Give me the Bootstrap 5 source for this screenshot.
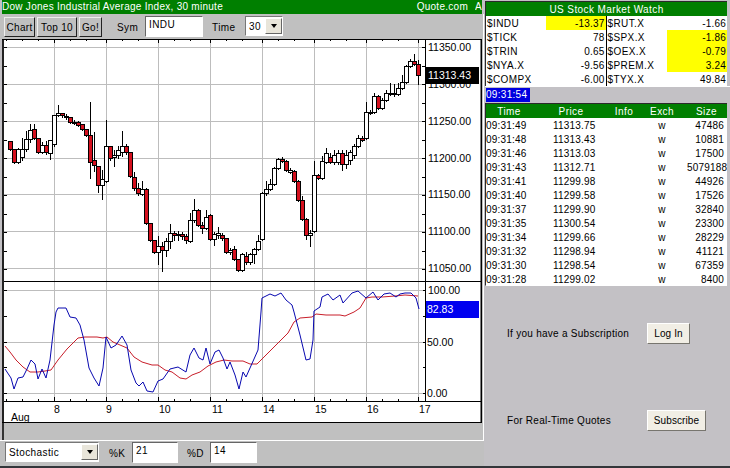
<!DOCTYPE html>
<html lang="en">
<head>
    <meta charset="UTF-8">
    <meta name="viewport" content="width=device-width, initial-scale=1.0">
    <title>Dow Jones Industrial Average Index</title>
    <link href="https://cdn.jsdelivr.net/npm/bootstrap@5.3.1/dist/css/bootstrap.min.css" rel="stylesheet">
    <style>
        html, body { margin: 0; overflow: hidden; background: #c3c1c5; }
        body, .qt-root, .qt-root .btn, .qt-root input, .qt-root table {
            font-family: "Liberation Sans", Arial, sans-serif;
            font-size: 10px;
            color: #000;
        }
        .qt-root { width: 730px; height: 468px; border-bottom: 2px solid #33363a; }
        .qt-left { width: 484px; height: 466px; }
        .qt-title {
            height: 14px; margin-left: 2px; background: #007f00; line-height: 14px;
            letter-spacing: .27px; white-space: nowrap; overflow: hidden; width: 480px;
        }
        .qt-title span { color: #fff; }
        .qt-brand { padding-right: 7px; }
        .qt-cut { width: 7px; overflow: hidden; }
        .qt-tools { height: 25px; padding: 2px 0 0 4px; background: #c0c0c0; border-right: 1px solid #fff; }
        .qt-tools-bottom { height: 26px; padding: 1px 0 0 5px; background: #c0c0c0; border-top: 1px solid #fff; }
        .qt-root .qt-btn {
            height: 20px; padding: 0; margin: 1px 0 0 2px; border-radius: 0; background: #c0c0c0; line-height: 17px;
            border: 1px solid; border-color: #eee #222 #222 #eee; letter-spacing: .3px;
        }
        .qt-root .qt-btn:first-child { margin-left: 0; }
        .qt-w-chart { width: 31px; }
        .qt-w-top { width: 40px; }
        .qt-w-go { width: 23px; }
        .qt-lbl { margin-top: 4px; letter-spacing: .4px; }
        .qt-l-sym { margin-left: 15px; width: 28px; }
        .qt-l-time { margin-left: 9px; width: 33px; }
        .qt-l-k { margin-left: 10px; width: 23px; }
        .qt-l-d { margin-left: 9px; width: 23px; }
        .qt-root input.qt-input {
            height: 21px; padding: 0 3px 5px; border-radius: 0; background: #fff; box-shadow: none; line-height: 14px;
            border: 1px solid; border-color: #666 #fff #fff #666; letter-spacing: .4px;
        }
        .qt-i-sym { width: 58px; }
        .qt-i-k { width: 46px; }
        .qt-i-d { width: 47px; }
        .qt-select {
            height: 20px; background: #fff; border: 1px solid; border-color: #777 #fff #fff #777;
            padding-left: 3px; letter-spacing: .4px;
        }
        .qt-s-time { width: 38px; }
        .qt-s-study { width: 94px; }
        .qt-drop {
            width: 17px; height: 16px; background: #e8e5da; border: 1px solid; border-color: #fff #666 #666 #fff;
        }
        .qt-drop::after {
            content: ""; border: 3px solid transparent; border-top: 4px solid #000; border-bottom: 0;
        }
        .qt-chart { height: 384px; margin-left: 2px; width: 482px; background: #c0c0c0; border-right: 1px solid #fff; }
        .qt-chart svg { display: block; }
        .qt-chart text { font-family: "Liberation Sans", Arial, sans-serif; font-size: 10.5px; }
        .qt-gap { height: 17px; margin-left: 2px; width: 482px; border-left: 2px solid #333; border-right: 1px solid #fff; background: #c0c0c0; }
        .qt-right { width: 246px; padding-left: 1px; }
        .qt-watch { height: 85px; margin-top: 1px; border: 1px solid #2a2a2a; border-width: 1px 0 0 1px; background: #fff; width: 242px; }
        .qt-root table.qt-table { table-layout: fixed; width: 241px; margin: 0; border-collapse: collapse; background: #fff; }
        .qt-table th, .qt-table td {
            height: 14px; padding: 0 1px; line-height: 13px; border: 0; white-space: nowrap; overflow: hidden;
            font-weight: 400; letter-spacing: .2px; background: #fff;
        }
        .qt-table thead th { background: #007f00; color: #fff; text-align: center; letter-spacing: .4px; }
        .qt-table .qt-sym { letter-spacing: .4px; }
        .qt-table .qt-split { border-right: 1px solid #000; }
        .qt-table td.qt-hot { background: #ffff00; }
        .qt-c60 { width: 60px; }
        .qt-c61 { width: 61px; }
        .qt-c46 { width: 46px; }
        .qt-c78 { width: 78px; }
        .qt-c28 { width: 28px; }
        .qt-c48 { width: 48px; }
        .qt-c41 { width: 41px; }
        .qt-clock { height: 17px; padding-top: 1px; background: #c3c1c5; border-top: 1px solid #fff; }
        .qt-clock span { display: block; width: 44px; height: 14px; margin-left: 1px; line-height: 14px; background: #0000e0; color: #fff; letter-spacing: .3px; }
        .qt-trades { width: 242px; height: 183px; border: 1px solid #2a2a2a; border-width: 1px 0 0 1px; border-bottom: 1px solid #ddd; background: #fff; }
        .qt-table td.qt-stamp { padding-left: 0; }
        .qt-table td.qt-pad { padding-left: 21px; }
        .qt-table td.qt-size { padding-right: 3px; }
        .qt-side { padding-left: 22px; }
        .qt-side-row { height: 21px; }
        .qt-side-row span { width: 140px; letter-spacing: .27px; }
        .qt-first { margin-top: 37px; }
        .qt-second { margin-top: 66px; }
        .qt-root .qt-cta {
            height: 21px; padding: 0; border-radius: 0; background: #f1eee5; line-height: 18px; letter-spacing: .1px;
            border: 1px solid; border-color: #fff #77756e #77756e #fff;
        }
        .qt-w-log { width: 43px; }
        .qt-w-sub { width: 59px; }
    </style>
</head>
<body>

<div class="qt-root d-flex">
    <div class="qt-left d-flex flex-column">
        <div class="qt-title d-flex justify-content-between">
            <span>Dow Jones Industrial Average Index, 30 minute</span>
            <div class="d-flex">
                <span class="qt-brand">Quote.com</span>
                <span class="qt-cut">A</span>
            </div>
        </div>
        <div class="qt-tools d-flex align-items-start">
            <button class="btn qt-btn qt-w-chart" type="button">Chart</button>
            <button class="btn qt-btn qt-w-top" type="button">Top 10</button>
            <button class="btn qt-btn qt-w-go" type="button">Go!</button>
            <span class="qt-lbl qt-l-sym">Sym</span>
            <input class="qt-input qt-i-sym" type="text" value="INDU">
            <span class="qt-lbl qt-l-time">Time</span>
            <div class="qt-select qt-s-time d-flex justify-content-between align-items-center">
                <span>30</span>
                <span class="qt-drop d-flex align-items-center justify-content-center"></span>
            </div>
        </div>
        <div class="qt-chart">
            <svg id="chart" width="480" height="384" viewBox="2 39 480 384" xmlns="http://www.w3.org/2000/svg"></svg>
        </div>
        <div class="qt-gap"></div>
        <div class="qt-tools-bottom d-flex align-items-start">
            <div class="qt-select qt-s-study d-flex justify-content-between align-items-center">
                <span>Stochastic</span>
                <span class="qt-drop d-flex align-items-center justify-content-center"></span>
            </div>
            <span class="qt-lbl qt-l-k">%K</span>
            <input class="qt-input qt-i-k" type="text" value="21">
            <span class="qt-lbl qt-l-d">%D</span>
            <input class="qt-input qt-i-d" type="text" value="14">
        </div>
    </div>

    <div class="qt-right d-flex flex-column">
        <div class="qt-watch">
            <table class="qt-table">
                <colgroup><col class="qt-c60"><col class="qt-c60"><col class="qt-c61"><col class="qt-c60"></colgroup>
                <thead><tr><th colspan="4">US Stock Market Watch</th></tr></thead>
                <tbody id="watch"></tbody>
            </table>
        </div>
        <div class="qt-clock"><span>09:31:54</span></div>
        <div class="qt-trades">
            <table class="qt-table">
                <colgroup><col class="qt-c46"><col class="qt-c78"><col class="qt-c28"><col class="qt-c48"><col class="qt-c41"></colgroup>
                <thead><tr><th>Time</th><th>Price</th><th>Info</th><th>Exch</th><th>Size</th></tr></thead>
                <tbody id="trades"></tbody>
            </table>
        </div>
        <div class="qt-side d-flex flex-column">
            <div class="qt-side-row d-flex align-items-center qt-first">
                <span>If you have a Subscription</span>
                <button class="btn qt-cta qt-w-log" type="button">Log In</button>
            </div>
            <div class="qt-side-row d-flex align-items-center qt-second">
                <span>For Real-Time Quotes</span>
                <button class="btn qt-cta qt-w-sub" type="button">Subscribe</button>
            </div>
        </div>
    </div>
</div>

<script>
    // market watch rows: symbol, value, highlighted
    const watch = [
        ['$INDU', '-13.37', 1, '$RUT.X', '-1.66', 0],
        ['$TICK', '78', 0, '$SPX.X', '-1.86', 1],
        ['$TRIN', '0.65', 0, '$OEX.X', '-0.79', 1],
        ['$NYA.X', '-9.56', 0, '$PREM.X', '3.24', 1],
        ['$COMPX', '-6.00', 0, '$TYX.X', '49.84', 0]
    ];
    document.getElementById('watch').innerHTML = watch.map(r => `<tr>
        <td class="qt-sym">${r[0]}</td><td class="text-end qt-split ${r[2] ? 'qt-hot' : ''}">${r[1]}</td>
        <td class="qt-sym">${r[3]}</td><td class="text-end ${r[5] ? 'qt-hot' : ''}">${r[4]}</td></tr>`).join('');

    const trades = [
        ['09:31:49', '11313.75', '47486'], ['09:31:48', '11313.43', '10881'], ['09:31:46', '11313.03', '17500'],
        ['09:31:43', '11312.71', '5079188'], ['09:31:41', '11299.98', '44926'], ['09:31:40', '11299.58', '17526'],
        ['09:31:37', '11299.90', '32840'], ['09:31:35', '11300.54', '23300'], ['09:31:34', '11299.66', '28229'],
        ['09:31:32', '11298.94', '41121'], ['09:31:30', '11298.54', '67359'], ['09:31:28', '11299.02', '8400']
    ];
    document.getElementById('trades').innerHTML = trades.map(r => `<tr>
        <td class="qt-stamp">${r[0]}</td><td class="qt-pad">${r[1]}</td><td></td><td class="text-center">w</td><td class="text-end qt-size">${r[2]}</td></tr>`).join('');

    // candles: top, bottom, red, high, low (pixel y), first one at x=10, 4px apart
    const candles = [
        // 7 Aug
        [141,149,1,141,150],[149,162,1,149,163],[149,162,0,148,163],[149,157,0,138,160],[139,149,0,131,151],[130,139,0,124,142],
        [129,138,1,124,139],[138,152,1,138,153],[145,152,0,142,153],[145,152,1,141,154],[140,153,0,140,159],
        // 8 Aug
        [115,144,0,115,146],[113,115,0,105,116],[113,115,1,113,117],[116,117,1,114,119],[117,122,1,117,123],[122,123,0,120,124],
        [122,125,1,121,126],[124,129,1,124,130],[129,135,1,129,136],[135,162,1,102,178],[160,165,1,132,171],[166,185,1,166,192],[179,185,0,170,199],
        // 9 Aug
        [146,181,0,120,182],[146,158,1,146,160],[155,157,0,150,166],[150,155,0,146,158],[146,152,0,131,156],[146,152,1,144,154],
        [152,176,1,152,177],[177,188,1,172,190],[188,193,1,183,195],[189,194,0,181,195],[189,223,1,188,224],[223,240,1,223,241],[240,252,1,240,253],
        // 10 Aug
        [246,252,0,236,264],[246,250,1,242,271],[241,250,0,238,256],[233,241,0,224,248],[233,235,1,231,240],[234,235,0,231,240],
        [234,236,1,232,239],[236,240,1,234,243],[220,241,0,213,242],[210,220,0,199,222],[210,225,1,209,226],[225,228,1,222,233],[217,228,0,210,229],
        // 11 Aug
        [215,239,1,214,240],[234,239,0,232,245],[233,235,0,227,238],[235,238,1,233,240],[238,252,1,238,253],[250,252,0,248,254],
        [249,259,1,246,260],[259,270,1,259,271],[254,270,0,253,271],[256,262,1,252,264],[254,262,0,253,264],[249,254,0,248,263],[241,249,0,235,250],
        // 14 Aug
        [193,239,0,192,240],[189,193,0,181,195],[184,189,0,179,190],[168,184,0,167,185],[159,168,0,158,169],[159,161,1,157,162],
        [161,170,1,160,171],[170,172,0,168,173],[171,181,1,170,182],[181,200,1,180,201],[200,219,1,196,220],[219,235,1,218,239],[233,235,0,230,246],
        // 15 Aug
        [175,231,0,161,232],[175,178,1,174,179],[161,178,0,156,179],[153,162,0,148,163],[157,162,1,153,163],[155,162,0,150,164],[153,162,0,150,164],
        [153,164,1,150,170],[155,164,0,150,168],[152,160,0,150,164],[146,155,0,144,158],[138,146,0,135,147],[138,140,1,136,141],
        // 16 Aug
        [112,138,0,102,139],[112,113,0,110,114],[96,112,0,93,113],[96,108,1,95,109],[100,108,0,98,109],[93,100,0,90,101],
        [93,94,0,83,95],[93,94,1,84,96],[88,94,0,83,95],[82,88,0,75,89],[66,82,0,65,83],[61,66,0,59,67],[61,64,1,54,65],
        // 17 Aug
        [64,75,1,60,84]
    ];

    const blue = [[5,369],[11,378],[14,389],[18,378],[23,377],[27,369],[31,360],[35,364],[38,379],[42,369],[46,378],[50,360],[54,325],[56,312],[58,308],[66,308],[70,317],[76,318],[80,325],[84,340],[89,368],[94,378],[99,386],[103,368],[106,337],[111,348],[116,345],[122,336],[127,345],[131,370],[136,383],[139,386],[143,382],[147,391],[153,392],[158,381],[163,379],[170,369],[178,367],[186,372],[190,355],[194,348],[199,358],[203,360],[206,348],[210,364],[215,352],[219,350],[223,358],[227,369],[230,362],[235,375],[239,389],[243,372],[246,377],[258,350],[261,312],[262,298],[270,294],[275,296],[281,293],[286,300],[292,305],[294,312],[300,335],[306,360],[310,359],[313,340],[314,311],[320,307],[322,297],[328,294],[333,300],[340,295],[343,303],[352,293],[358,291],[366,298],[373,292],[378,300],[384,294],[390,293],[396,297],[400,294],[405,293],[411,293],[416,298],[419,309]];
    const red = [[5,346],[10,352],[16,360],[23,367],[30,372],[38,372],[45,371],[51,370],[58,360],[67,349],[78,338],[85,337],[97,337],[103,338],[107,337],[113,342],[120,345],[127,348],[134,357],[142,362],[152,365],[158,365],[165,370],[172,372],[180,378],[186,379],[192,375],[200,372],[208,366],[216,362],[224,360],[232,361],[243,361],[250,364],[257,364],[263,358],[272,349],[280,341],[288,333],[294,322],[300,318],[312,317],[316,314],[326,315],[340,315],[345,316],[354,312],[360,308],[366,298],[372,297],[382,297],[395,296],[405,295],[418,296]];

    let s = '<rect x="4" y="39" width="478" height="384" fill="#fff"/>';
    const line = (x1, y1, x2, y2, c) => `<line x1="${x1}" y1="${y1}" x2="${x2}" y2="${y2}" stroke="${c}" shape-rendering="crispEdges"/>`;
    const days = [54, 106, 158, 210, 262, 314, 366, 418];

    // grid
    days.forEach(x => { s += line(x + .5, 40, x + .5, 401, '#bdbdbd'); });
    [47, 84, 121, 158, 194, 231, 268, 290, 342, 393].forEach(y => { s += line(4, y + .5, 425, y + .5, '#bdbdbd'); });

    // ticks on the axes
    [6, 22, 38, 54, 70, 86, 106, 122, 138, 158, 174, 190, 210, 226, 242, 262, 278, 294, 314, 330, 346, 366, 382, 398, 418].forEach(x => {
        const major = days.includes(x);
        s += line(x + .5, 40, x + .5, major ? 43 : 41, '#000');
        s += line(x + .5, major ? 397 : 399, x + .5, 401, '#000');
    });
    for (let y = 47; y < 280; y += 18.5) {
        s += line(4, Math.round(y) + .5, 7, Math.round(y) + .5, '#000');
        s += line(422, Math.round(y) + .5, 425, Math.round(y) + .5, '#000');
    }
    [290, 316, 342, 367, 393].forEach(y => {
        s += line(4, y + .5, 7, y + .5, '#000');
        s += line(423, y + .5, 425, y + .5, '#000');
    });

    // candles
    candles.forEach((c, i) => {
        const x = 10 + i * 4;
        s += line(x + .5, c[3], x + .5, c[4] + 1, '#000');
        s += `<rect x="${x - 1.5}" y="${c[0] + .5}" width="4" height="${Math.max(c[1] - c[0], 1)}" fill="${c[2] ? '#d5101e' : '#fff'}" stroke="#000" shape-rendering="crispEdges"/>`;
    });

    // stochastic lines
    const poly = (pts, c) => `<polyline points="${pts.map(p => p.join(',')).join(' ')}" fill="none" stroke="${c}" stroke-width="1"/>`;
    s += poly(red, '#c81e2a') + poly(blue, '#0808b0');

    // frame
    s += '<rect x="2" y="39" width="2" height="384" fill="#222"/>';
    s += line(2, 39.5, 482, 39.5, '#000') + line(4, 281.5, 481, 281.5, '#000') + line(4, 401.5, 481, 401.5, '#000');
    s += line(2, 422.5, 482, 422.5, '#000') + line(425.5, 39, 425.5, 401, '#000');
    s += '<rect x="480.5" y="39" width="1.5" height="385" fill="#000"/>';

    // price labels
    const label = (x, y, t, c) => `<text x="${x}" y="${y}" fill="${c || '#000'}">${t}</text>`;
    [['11350.00', 51], ['11300.00', 88], ['11250.00', 125], ['11200.00', 162], ['11150.00', 198], ['11100.00', 235], ['11050.00', 272], ['100.00', 294]].forEach(l => {
        s += label(428, l[1], l[0]);
    });
    s += label(427, 346, '50.00') + label(427, 397, '0.00');
    s += '<rect x="425" y="67" width="54" height="17" fill="#000"/>' + label(428, 79, '11313.43', '#fff');
    s += '<rect x="426" y="301" width="53" height="17" fill="#0000f0"/>' + label(427, 313, '82.83', '#fff');
    [['8', 54], ['9', 106], ['10', 159], ['11', 212], ['14', 263], ['15', 315], ['16', 367], ['17', 419]].forEach(l => {
        s += label(l[1], 413, l[0]);
    });
    s += label(11, 421, 'Aug');
    document.getElementById('chart').innerHTML = s;
</script>

<script src="https://cdn.jsdelivr.net/npm/bootstrap@5.3.1/dist/js/bootstrap.bundle.min.js"></script>
</body>
</html>
